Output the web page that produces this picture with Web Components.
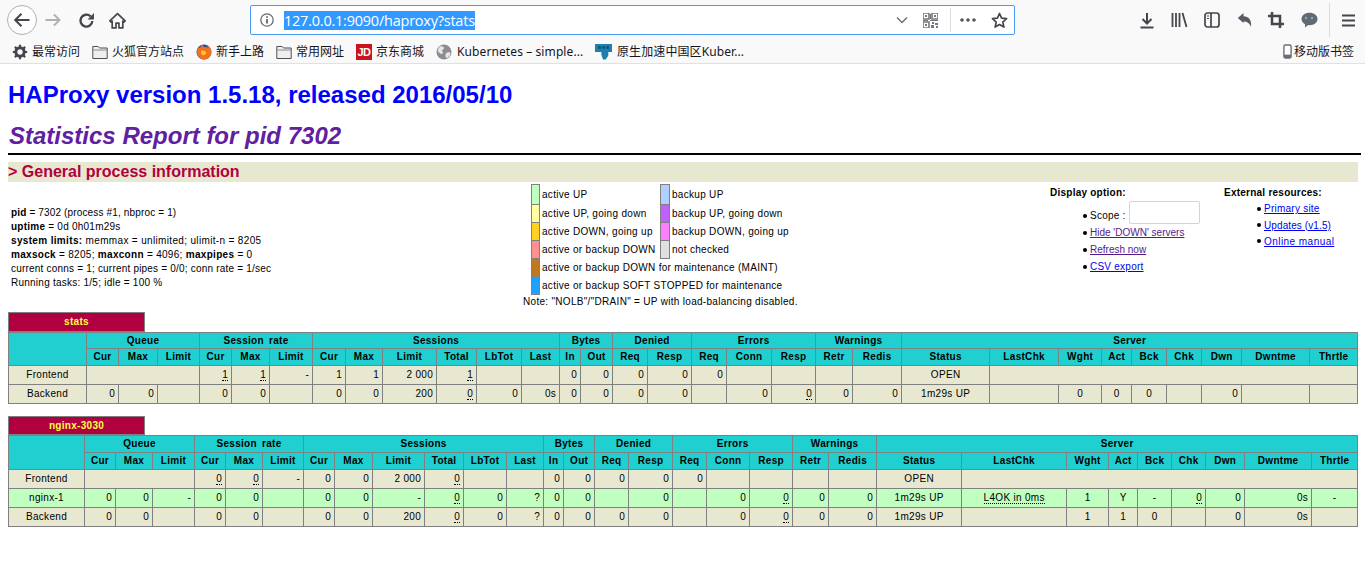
<!DOCTYPE html>
<html lang="en">
<head>
<meta charset="utf-8">
<title>Statistics Report for HAProxy</title>
<style>
  html, body { margin: 0; padding: 0; background: #fff; }
  body { font-family: "Liberation Sans", Arial, sans-serif; overflow: hidden; }
</style>
</head>
<body>
<browser-toolbar></browser-toolbar>
<bookmark-bar>
  <bookmark-item label="最常访问" width="71"><svg viewBox="0 0 16 16" width="16" height="16"><circle cx="8" cy="8" r="4.2" fill="none" stroke="#45454d" stroke-width="3"/><path d="M8 .8v3M8 12.2v3M.8 8h3M12.2 8h3M2.9 2.9 5 5M11 11l2.1 2.1M13.1 2.9 11 5M5 11l-2.1 2.1" stroke="#45454d" stroke-width="2.2"/></svg></bookmark-item>
  <bookmark-item label="火狐官方站点" width="95"><svg viewBox="0 0 16 16" width="16" height="16"><path d="M.8 2.500h5.400l1.500 1.500h7.500v10.500H.8z" fill="#efefec" stroke="#4f4f55"/><path d="M1 6h14" stroke="#8a8a8f"/></svg></bookmark-item>
  <bookmark-item label="新手上路" width="71"><svg viewBox="0 0 16 16" width="16" height="16"><circle cx="8" cy="8" r="7.5" fill="#2b4a9b"/><path d="M2 3.500C1 6 .5 9 2 12c2 3.500 7 4.500 10 2.500 3-2 4-6 2.800-9C14 3 12 1.200 10 1c1.200 1 1.800 2 2 3.200C11 3 9.500 2.700 8 3.200 7 2.500 6.800 1.500 7 .8 5.500 1.500 4.500 2.500 4.300 3.800 3.500 3.800 2.800 3.500 2 3.500z" fill="#f2711c"/><path d="M5 7c1.500-1 4-.8 5 1 .6 1.400-.6 3-2.400 3.200C6 11.400 4.800 10 5 7z" fill="#f9c13a"/></svg></bookmark-item>
  <bookmark-item label="常用网址" width="71"><svg viewBox="0 0 16 16" width="16" height="16"><path d="M.8 2.500h5.400l1.500 1.500h7.500v10.500H.8z" fill="#efefec" stroke="#4f4f55"/><path d="M1 6h14" stroke="#8a8a8f"/></svg></bookmark-item>
  <bookmark-item label="京东商城" width="71"><jd-mark></jd-mark></bookmark-item>
  <bookmark-item label="Kubernetes – simple..." width="150" style="--ls:.1px;--gap:5px"><svg viewBox="0 0 16 16" width="16" height="16"><circle cx="8" cy="8" r="7.500" fill="#8c8c90"/><path d="M4 2.500c2-.8 4 .2 4.200 1.800L6 6.500l1.200 2.300-2 1.400L2 7.500C1.800 5.500 2.500 3.500 4 2.500zM10 9l3.500-1 1 1.500c-.4 2.200-2 4-4 4.800l-1.200-2.300z" fill="#e6e6e8"/></svg></bookmark-item>
  <bookmark-item label="原生加速中国区Kuber..." width="150" style="--ls:.1px;--gap:5px"><svg viewBox="0 0 16 16" width="17" height="17"><path d="M0 1h16v7.500h-3.500V12L10 15.500H7.500L6 11V8.500H0z" fill="#1b7fb0"/><path d="M3 3h2.500v2.500H3zM6.800 3h2.500v2.500H6.800zM10.600 3h2.500v2.500h-2.500z" fill="#10506f"/></svg></bookmark-item>
  <span style="flex:1"></span>
  <bookmark-item label="移动版书签" width="72" style="--gap:2px"><svg viewBox="0 0 10 16" width="9" height="15"><rect x="1" y=".8" width="8" height="14.400" rx="1.600" fill="#fff" stroke="#6d6d73" stroke-width="1.500"/><rect x="1" y="11.500" width="8" height="3.700" fill="#6d6d73"/></svg></bookmark-item>
</bookmark-bar>
<stats-page></stats-page>

<template id="toolbar-tpl">
  <style>
    :host { display: flex; align-items: center; height: 40px; background: #f9f9fa; padding: 0 0 0 7px; box-sizing: border-box; color: #45454d; }
    svg { display: block; flex: none; }
    .back { width: 30px; height: 30px; border: 1px solid #b1b1b3; border-radius: 50%; background: #fdfdfd; display: flex; align-items: center; justify-content: center; box-sizing: border-box; margin-right: 8px; }
    .nav { display: flex; align-items: center; gap: 14px; margin-right: 124px; }
    .nav svg:first-child { margin-right: 1px; }
    .url { width: 765px; height: 30px; box-sizing: border-box; border: 1px solid #4a9af5; border-radius: 2px; background: #fff; display: flex; align-items: center; padding-left: 9px; }
    .addr { font: 14.500px/19px "Open Sans", "Noto Sans", sans-serif; background: #3399ff; color: #fff; margin-left: 10px; white-space: nowrap; letter-spacing: -.23px; }
    .fill { flex: 1; }
    .sep { width: 1px; height: 24px; background: #dcdcde; }
    .tools { display: flex; align-items: center; margin-left: 124px; }
  </style>
  <div class="back"><svg width="18" height="18" viewBox="0 0 18 18"><path d="M16.500 9H2.500M8.500 2.800 2.200 9l6.300 6.200" fill="none" stroke="#45454d" stroke-width="2"/></svg></div>
  <div class="nav">
    <svg width="16" height="16" viewBox="0 0 16 16"><path d="M.5 8h14M9 2.500 14.500 8 9 13.500" fill="none" stroke="#b1b1b3" stroke-width="2"/></svg>
    <svg width="17" height="17" viewBox="0 0 16 16" style="margin-left:2px"><path d="M13.500 8.500a5.600 5.600 0 1 1-1.700-4.400" fill="none" stroke="#45454d" stroke-width="2.200"/><path d="M15 1v6H9z" fill="#45454d"/></svg>
    <svg width="17" height="17" viewBox="0 0 16 16"><path d="M8 1.500.8 8.300l1.200 1.200 1-.9V15h3.600v-4.500h2.800V15H13V8.600l1 .9 1.200-1.200z" fill="none" stroke="#45454d" stroke-width="1.600" stroke-linejoin="round"/></svg>
  </div>
  <div class="url">
    <svg width="14" height="14" viewBox="0 0 14 14"><circle cx="7" cy="7" r="6.200" fill="none" stroke="#6a6a70" stroke-width="1.300"/><path d="M7 6v4.500M7 3.200v1.500" stroke="#45454d" stroke-width="1.500"/></svg>
    <span class="addr">127.0.0.1:9090/haproxy?stats</span>
    <span class="fill"></span>
    <svg width="12" height="8" viewBox="0 0 12 8"><path d="M1 1.500 6 6.500l5-5" fill="none" stroke="#6a6a70" stroke-width="1.300"/></svg>
    <svg width="15" height="15" viewBox="0 0 15 15" style="margin:0 12px 0 15px" fill="#77777c"><path d="M0 0h6v6H0zM9 0h6v6H9zM0 9h6v6H0z" fill="none" stroke="#77777c" stroke-width="1.600"/><path d="M2 2h2v2H2zM11 2h2v2h-2zM2 11h2v2H2zM7 1h1v5H7zM7 7h8v1H7zM9 9h2v2H9zM12 10h3v2h-3zM8 12h3v3H8zM13 13h2v2h-2zM0 7h5v1H0z"/></svg>
    <span class="sep"></span>
    <svg width="16" height="4" viewBox="0 0 16 4" style="margin:0 15px 0 9px" fill="#55555c"><circle cx="2" cy="2" r="1.800"/><circle cx="8" cy="2" r="1.800"/><circle cx="14" cy="2" r="1.800"/></svg>
    <svg width="17" height="17" viewBox="0 0 17 17"><path d="M8.500 1.500l2.100 4.700 5 .5-3.800 3.400 1.100 5-4.400-2.600-4.400 2.600 1.100-5L1.400 6.700l5-.5z" fill="none" stroke="#45454d" stroke-width="1.700" stroke-linejoin="round"/></svg>
    <span style="width:6px"></span>
  </div>
  <div class="tools">
    <svg width="16" height="17" viewBox="0 0 16 17" style="margin-right:16px"><path d="M8 1v10M3.500 7 8 11.500 12.500 7" fill="none" stroke="#45454d" stroke-width="2"/><path d="M1.500 15.500h13" stroke="#45454d" stroke-width="2"/></svg>
    <svg width="17" height="16" viewBox="0 0 17 16" style="margin-right:16px"><path d="M1.500 1v14M5 1v14M8.500 1v14M11.500 1l4 14" fill="none" stroke="#45454d" stroke-width="1.800"/></svg>
    <svg width="16" height="16" viewBox="0 0 16 16" style="margin-right:17px"><rect x="1" y="1" width="14" height="14" rx="2.500" fill="none" stroke="#45454d" stroke-width="1.700"/><path d="M7 1v14" stroke="#45454d" stroke-width="1.700"/><path d="M3 4h2M3 6.500h2" stroke="#45454d" stroke-width="1.200"/></svg>
    <svg width="16" height="16" viewBox="0 0 16 16" style="margin-right:15px"><path d="M.8 6 6.500 1v3.300c5 0 8.500 3.500 7.500 10.700-1-3.500-3.500-5.500-7.500-5.500V11z" fill="#5a5a62"/></svg>
    <svg width="16" height="16" viewBox="0 0 16 16" style="margin-right:17px"><path d="M4 0v12h12M0 4h12v12" fill="none" stroke="#45454d" stroke-width="2.500"/></svg>
    <svg width="17" height="16" viewBox="0 0 17 16" style="margin-right:11px"><path d="M8.500 .8c4.500 0 8 2.600 8 6.200s-3.500 6.200-8 6.200l-1.300-.1L4 15.500v-3.200C2 11.200.5 9.300.5 7 .5 3.400 4 .8 8.500 .8z" fill="#5f6a75"/><circle cx="5" cy="6" r="1.200" fill="#9aa3ab"/><circle cx="11" cy="6" r="1.200" fill="#9aa3ab"/></svg>
    <span class="sep" style="height:34px"></span>
    <svg width="13" height="13" viewBox="0 0 13 13" style="margin-left:12px"><path d="M0 1.500h13M0 6.500h13M0 11.500h13" stroke="#45454d" stroke-width="2"/></svg>
  </div>
</template>

<template id="process-tpl">
  <style>
    :host { display: block; font-size: 10px; line-height: 14px; padding: 24px 0 0 3px; letter-spacing: .24px; white-space: nowrap; color: #000; }
    div { height: 14px; }
    b { font-weight: bold; }
  </style>
  <div style="letter-spacing:.15px"><b>pid</b> = 7302 (process #1, nbproc = 1)</div>
  <div><b>uptime</b> = 0d 0h01m29s</div>
  <div style="letter-spacing:.34px"><b>system limits:</b> memmax = unlimited; ulimit-n = 8205</div>
  <div style="letter-spacing:.3px"><b>maxsock</b> = 8205; <b>maxconn</b> = 4096; <b>maxpipes</b> = 0</div>
  <div style="letter-spacing:.2px">current conns = 1; current pipes = 0/0; conn rate = 1/sec</div>
  <div>Running tasks: 1/5; idle = 100 %</div>
</template>

<template id="legend-tpl">
  <style>
    :host { display: block; font-size: 10px; letter-spacing: .3px; white-space: nowrap; padding-top: 2px; }
    table { border-collapse: collapse; table-layout: fixed; width: 265px; margin-left: 8px; }
    td { padding: 0 0 0 2px; height: 17px; font-size: 10px; }
    td.s { border: 1px solid gray; padding: 0; }
    tr:first-child td { height: 19px; }
    .note { margin-top: 1px; line-height: 12px; }
  </style>
  <table>
    <colgroup><col style="width:8px"><col style="width:121px"><col style="width:9px"><col></colgroup>
    <tr><td class="s" style="background:#c0ffc0"></td><td>active UP</td><td class="s" style="background:#b0d0ff"></td><td>backup UP</td></tr>
    <tr><td class="s" style="background:#ffffa0"></td><td>active UP, going down</td><td class="s" style="background:#c060ff"></td><td>backup UP, going down</td></tr>
    <tr><td class="s" style="background:#ffd020"></td><td>active DOWN, going up</td><td class="s" style="background:#ff80ff"></td><td>backup DOWN, going up</td></tr>
    <tr><td class="s" style="background:#ff9090"></td><td>active or backup DOWN</td><td class="s" style="background:#e0e0e0"></td><td>not checked</td></tr>
    <tr><td class="s" style="background:#c07820"></td><td colspan="3">active or backup DOWN for maintenance (MAINT)</td></tr>
    <tr><td class="s" style="background:#20a0ff"></td><td colspan="3">active or backup SOFT STOPPED for maintenance</td></tr>
  </table>
  <div class="note">Note: "NOLB"/"DRAIN" = UP with load-balancing disabled.</div>
</template>

<template id="links-tpl">
  <style>
    :host { display: block; font-size: 10px; letter-spacing: .24px; white-space: nowrap; padding-top: 5px; }
    .head { font-weight: bold; line-height: 12px; }
    ul { list-style: none; margin: 0; padding: 0 0 0 var(--indent, 40px); }
    li { position: relative; display: flex; align-items: center; }
    li::before { content: ""; position: absolute; left: -7px; top: 50%; margin-top: -2px; width: 4px; height: 4px; border-radius: 50%; background: #000; }
    li.scope::before { margin-top: 1px; }
    a { color: var(--link, #0000ee); text-decoration: underline; }
    a.v { color: #551a8b; letter-spacing: 0; }
    .sc { margin-top: 5px; }
    .in { width: 71px; height: 23px; box-sizing: border-box; border: 1px solid #d4d4d8; border-radius: 2px; background: #fff; margin-left: 3px; }
  </style>
  <div class="head"></div>
  <ul></ul>
</template>

<template id="stats-tpl">
  <style>
    :host { display: block; font-size: 10px; letter-spacing: .3px; }
    table { border-collapse: collapse; table-layout: fixed; }
    td, th { border: 1px solid gray; padding: 0 3px 0 1px; font-size: 10px; line-height: 12px; text-align: right; white-space: nowrap; overflow: visible; font-weight: normal; }
    .name { background: #b00040; color: #ffff40; font-weight: bold; text-align: center; padding: 0; width: 135px; }
    .title { width: 136px; }
    th { background: #20d0d0; color: #000; font-weight: bold; text-align: center; padding: 0; height: 16px; word-spacing: 2px; }
    tr.data td { height: 18px; background: #e8e8d0; }
    tr.up td { background: #c0ffc0; }
    td.c { text-align: center; padding: 0; }
    u { text-decoration: none; border-bottom: 1px dotted #000; }
  </style>
  <table class="title"><tr><td class="name"></td></tr></table>
  <table class="grid"></table>
</template>

<template id="page-tpl">
  <style>
    :host { display: block; padding: 0 7px 0 8px; color: #000; font-family: "Liberation Sans", Arial, sans-serif; }
    h1 { font-size: 24px; line-height: 28px; margin: 0; padding-top: 17px; color: #0000ff; font-weight: bold; }
    h2 { font-size: 24px; line-height: 28px; margin: 13px 0 0; color: #6020a0; font-style: italic; font-weight: bold; padding-left: 1px; }
    .hr { height: 2px; background: #000; margin: 3px -3px 0 0; }
    h3 { font-size: 16px; line-height: 20px; height: 20px; margin: 7px 0 0; background: #e8e8d0; color: #b00040; font-weight: bold; }
    .info { display: grid; grid-template-columns: 515px 527px 174px auto; height: 130px; }
    stats-table.first { margin-bottom: 12px; }
  </style>
  <h1>HAProxy version 1.5.18, released 2016/05/10</h1>
  <h2>Statistics Report for pid 7302</h2>
  <div class="hr"></div>
  <h3>&gt; General process information</h3>
  <div class="info">
    <process-info></process-info>
    <status-legend></status-legend>
    <link-list id="display" style="--indent:40px"></link-list>
    <link-list id="external" style="--indent:40px"></link-list>
  </div>
  <stats-table class="first" id="t1"></stats-table>
  <stats-table id="t2"></stats-table>
</template>

<script>
function cloneTpl(host, id) {
  const root = host.attachShadow({ mode: "open" });
  root.appendChild(document.getElementById(id).content.cloneNode(true));
  return root;
}

class BrowserToolbar extends HTMLElement {
  constructor() { super(); cloneTpl(this, "toolbar-tpl"); }
}

class BookmarkBar extends HTMLElement {
  constructor() {
    super();
    this.attachShadow({ mode: "open" }).innerHTML = `
      <style>
        :host { display: flex; align-items: center; height: 23px; padding: 0 10px 0 12px; background: #f9f9fa; border-bottom: 1px solid #e1e1e2; }
      </style>
      <slot></slot>`;
  }
}

class BookmarkItem extends HTMLElement {
  constructor() {
    super();
    this.attachShadow({ mode: "open" }).innerHTML = `
      <style>
        :host { display: flex; align-items: center; flex: none; gap: var(--gap, 4px); font: 12px/16px "Noto Sans", "Noto Sans CJK SC", sans-serif; color: #15141a; white-space: nowrap; width: ${this.getAttribute("width")}px; margin-right: 9px; }
        :host(:last-child) { margin-right: 0; }
        span { letter-spacing: var(--ls, 0); }
      </style>
      <slot></slot><span>${this.getAttribute("label")}</span>`;
  }
}

class JdMark extends HTMLElement {
  constructor() {
    super();
    this.attachShadow({ mode: "open" }).innerHTML = `
      <style>
        :host { display: block; width: 16px; height: 16px; background: #c9151e; color: #fff; font: bold 11px/16px "Liberation Sans", sans-serif; text-align: center; letter-spacing: -.5px; }
      </style>JD`;
  }
}

class ProcessInfo extends HTMLElement {
  constructor() { super(); cloneTpl(this, "process-tpl"); }
}

class StatusLegend extends HTMLElement {
  constructor() { super(); cloneTpl(this, "legend-tpl"); }
}

class LinkList extends HTMLElement {
  constructor() { super(); this.root = cloneTpl(this, "links-tpl"); }
  set data(d) {
    this.root.querySelector(".head").textContent = d.head;
    const ul = this.root.querySelector("ul");
    ul.style.marginTop = d.gapTop + "px";
    d.items.forEach((it) => {
      const li = document.createElement("li");
      li.style.height = it.h + "px";
      if (it.cls) li.className = it.cls;
      li.innerHTML = it.html;
      ul.appendChild(li);
    });
  }
}

const GROUPS = [["Queue", 3], ["Session rate", 3], ["Sessions", 6], ["Bytes", 2], ["Denied", 2], ["Errors", 3], ["Warnings", 2], ["Server", 9]];
const COLS = ["Cur", "Max", "Limit", "Cur", "Max", "Limit", "Cur", "Max", "Limit", "Total", "LbTot", "Last", "In", "Out", "Req", "Resp", "Req", "Conn", "Resp", "Retr", "Redis", "Status", "LastChk", "Wght", "Act", "Bck", "Chk", "Dwn", "Dwntme", "Thrtle"];

// cell shorthand: "~x" dotted underline, "^x" centred, "=n" empty cell spanning n columns
function cell(v) {
  if (v.startsWith("=")) return `<td colspan="${v.slice(1)}"></td>`;
  let cls = "";
  if (v.startsWith("^")) { cls = ' class="c"'; v = v.slice(1); }
  if (v.startsWith("~")) v = `<u>${v.slice(1)}</u>`;
  return `<td${cls}>${v}</td>`;
}

class StatsTable extends HTMLElement {
  constructor() { super(); this.root = cloneTpl(this, "stats-tpl"); }
  set data(d) {
    const name = this.root.querySelector(".name");
    name.textContent = d.name;
    name.style.height = d.titleHeight + "px";
    const widths = d.edges.slice(1).map((e, i) => e - d.edges[i]);
    const total = d.edges[d.edges.length - 1] - d.edges[0];
    const grid = this.root.querySelector(".grid");
    grid.style.width = total + "px";
    grid.innerHTML = `
      <colgroup>${widths.map((w) => `<col style="width:${w}px">`).join("")}</colgroup>
      <tr><th rowspan="2"></th>${GROUPS.map(([g, n]) => `<th colspan="${n}" style="height:${d.groupHeight}px">${g}</th>`).join("")}</tr>
      <tr>${COLS.map((c) => `<th>${c}</th>`).join("")}</tr>
      ${d.rows.map((r) => `<tr class="data ${r.up ? "up" : ""}"><td class="c">${r.name}</td>${r.cells.map(cell).join("")}</tr>`).join("")}`;
  }
}

class StatsPage extends HTMLElement {
  constructor() { super(); this.root = cloneTpl(this, "page-tpl"); }
  connectedCallback() {
    const $ = (id) => this.root.getElementById(id);
    $("display").data = {
      head: "Display option:", gapTop: 2,
      items: [
        { h: 23, cls: "scope", html: '<span class="sc">Scope :</span><span class="in"></span>' },
        { h: 17, html: `<a class="v" href="#">Hide 'DOWN' servers</a>` },
        { h: 17, html: '<a class="v" href="#">Refresh now</a>' },
        { h: 17, html: '<a href="#">CSV export</a>' },
      ],
    };
    $("external").data = {
      head: "External resources:", gapTop: 1,
      items: [
        { h: 17, html: '<a href="#">Primary site</a>' },
        { h: 16, html: '<a href="#" style="letter-spacing:.1px">Updates (v1.5)</a>' },
        { h: 16, html: '<a href="#" style="letter-spacing:.45px">Online manual</a>' },
      ],
    };
    $("t1").data = {
      name: "stats", titleHeight: 18, groupHeight: 15,
      edges: [8, 86, 118, 157, 199, 231, 269, 312, 345, 382, 436, 476, 521, 559, 580, 612, 647, 691, 726, 771, 815, 852, 901, 989, 1058, 1101, 1131, 1166, 1201, 1241, 1309, 1357],
      rows: [
        { name: "Frontend", cells: ["=3", "~1", "~1", "-", "1", "1", "2 000", "~1", "=1", "=1", "0", "0", "0", "0", "0", "=1", "=1", "=1", "=1", "^OPEN", "=8"] },
        { name: "Backend", cells: ["0", "0", "=1", "0", "0", "=1", "0", "0", "200", "~0", "0", "0s", "0", "0", "0", "0", "=1", "0", "~0", "0", "0", "^1m29s UP", "=1", "^0", "^0", "^0", "=1", "0", "=1", "=1"] },
      ],
    };
    $("t2").data = {
      name: "nginx-3030", titleHeight: 17, groupHeight: 16,
      edges: [8, 84, 115, 152, 194, 225, 262, 303, 334, 372, 424, 463, 506, 543, 563, 594, 628, 672, 706, 749, 792, 828, 876, 961, 1066, 1108, 1137, 1171, 1205, 1244, 1311, 1357],
      rows: [
        { name: "Frontend", cells: ["=3", "~0", "~0", "-", "0", "0", "2 000", "~0", "=1", "=1", "0", "0", "0", "0", "0", "=1", "=1", "=1", "=1", "^OPEN", "=8"] },
        { name: "nginx-1", up: true, cells: ["0", "0", "-", "0", "0", "=1", "0", "0", "-", "~0", "0", "?", "0", "0", "=1", "0", "=1", "0", "~0", "0", "0", "^1m29s UP", "^~L4OK in 0ms", "^1", "^Y", "^-", "~0", "0", "0s", "^-"] },
        { name: "Backend", cells: ["0", "0", "=1", "0", "0", "=1", "0", "0", "200", "~0", "0", "?", "0", "0", "0", "0", "=1", "0", "~0", "0", "0", "^1m29s UP", "=1", "^1", "^1", "^0", "=1", "0", "0s", "=1"] },
      ],
    };
  }
}

customElements.define("browser-toolbar", BrowserToolbar);
customElements.define("bookmark-bar", BookmarkBar);
customElements.define("bookmark-item", BookmarkItem);
customElements.define("jd-mark", JdMark);
customElements.define("process-info", ProcessInfo);
customElements.define("status-legend", StatusLegend);
customElements.define("link-list", LinkList);
customElements.define("stats-table", StatsTable);
customElements.define("stats-page", StatsPage);
</script>
</body>
</html>
